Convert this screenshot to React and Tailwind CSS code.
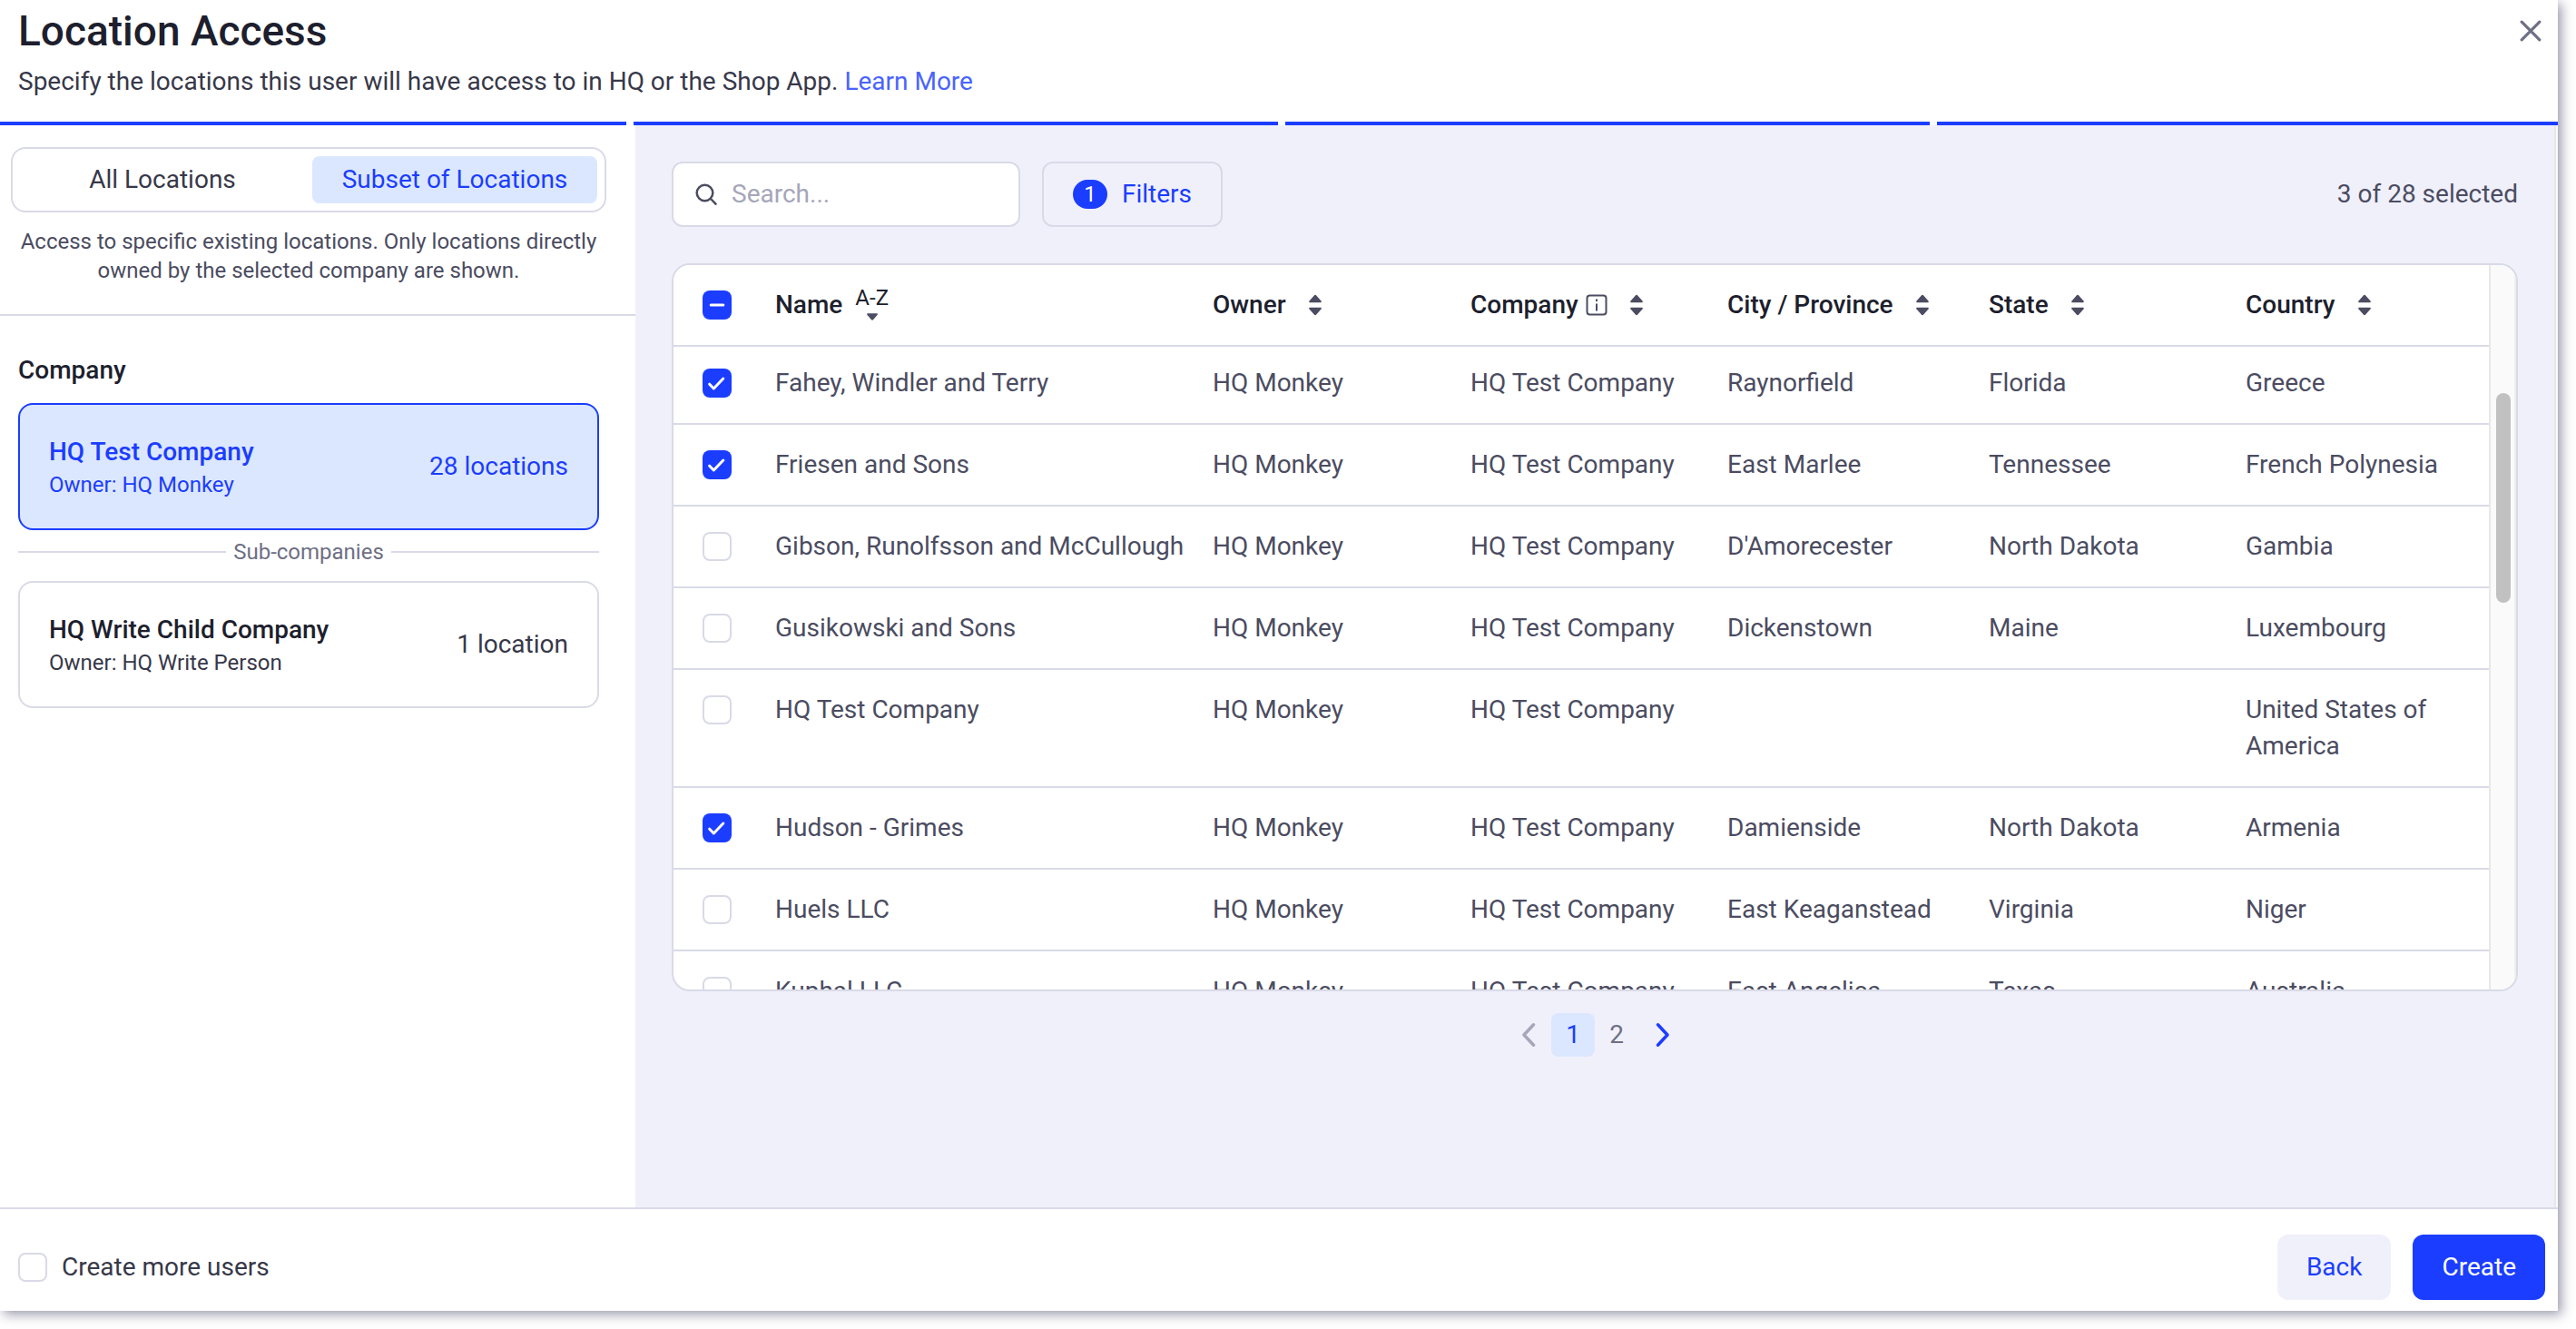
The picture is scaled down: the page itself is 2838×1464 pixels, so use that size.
import { useState } from 'react'

const COMPANIES = [
  { id: 1, name: 'HQ Test Company', owner: 'HQ Monkey', count: '28 locations' },
  { id: 2, name: 'HQ Write Child Company', owner: 'HQ Write Person', count: '1 location' },
]

const LOCATIONS = [
  { name: 'Fahey, Windler and Terry', city: 'Raynorfield', state: 'Florida', country: 'Greece' },
  { name: 'Friesen and Sons', city: 'East Marlee', state: 'Tennessee', country: 'French Polynesia' },
  { name: 'Gibson, Runolfsson and McCullough', city: "D'Amorecester", state: 'North Dakota', country: 'Gambia' },
  { name: 'Gusikowski and Sons', city: 'Dickenstown', state: 'Maine', country: 'Luxembourg' },
  { name: 'HQ Test Company', city: '', state: '', country: 'United States of America' },
  { name: 'Hudson - Grimes', city: 'Damienside', state: 'North Dakota', country: 'Armenia' },
  { name: 'Huels LLC', city: 'East Keaganstead', state: 'Virginia', country: 'Niger' },
  { name: 'Kuphal LLC', city: 'East Angelica', state: 'Texas', country: 'Australia' },
]

const GRID = 'grid grid-cols-[96px_482px_284px_283px_288px_283px_1fr]'

function Checkbox({ checked, mixed, onChange }) {
  const on = checked || mixed
  return (
    <button
      type="button"
      role="checkbox"
      aria-checked={mixed ? 'mixed' : checked}
      onClick={onChange}
      className={`flex h-8 w-8 shrink-0 items-center justify-center rounded-lg ${on ? 'bg-[#1b3dff]' : 'border-2 border-[#d9dae7] bg-white'}`}
    >
      {on && (
        <svg width="32" height="32" viewBox="0 0 32 32" fill="none" stroke="#fff" strokeWidth="3" strokeLinecap="round" strokeLinejoin="round">
          {mixed ? <path d="M9.2 16h13.6" /> : <path d="M7.7 17.2l4.6 4.8 10.5-11" />}
        </svg>
      )}
    </button>
  )
}

function SortIcon() {
  return (
    <svg width="14" height="24" viewBox="0 0 14 24" fill="#4b4c61" className="ml-[25px] shrink-0">
      <path d="M7 .8c.5 0 .9.2 1.2.6l5.3 6c.7.8.3 1.8-.8 1.8H1.3C.2 9.2-.2 8.2.5 7.4l5.3-6C6.1 1 6.5.8 7 .8z" />
      <path d="M7 23.2c.5 0 .9-.2 1.2-.6l5.3-6c.7-.8.3-1.8-.8-1.8H1.3c-1.1 0-1.5 1-.8 1.8l5.3 6c.3.4.7.6 1.2.6z" />
    </svg>
  )
}

function InfoIcon() {
  return (
    <svg width="24" height="24" viewBox="0 0 24 24" fill="none" stroke="#4b4c61" strokeWidth="2" className="ml-2 shrink-0">
      <rect x="1.5" y="1.5" width="21" height="21" rx="3" />
      <path d="M12 10.5v8" />
      <path d="M12 5.5v2.5" />
    </svg>
  )
}

function HeaderCell({ label, info }) {
  return (
    <div className="flex items-center pl-4">
      <span>{label}</span>
      {info && <InfoIcon />}
      <SortIcon />
    </div>
  )
}

function CompanyCard({ company, selected, onClick }) {
  return (
    <button
      type="button"
      onClick={onClick}
      className={`flex h-[140px] w-full items-center justify-between rounded-2xl border-2 px-8 text-left ${selected ? 'border-[#1b3dff] bg-[#dbe7ff] text-[#1b3dff]' : 'border-[#d9dae7] bg-white text-[#373849]'}`}
    >
      <div>
        <p className={`font-medium ${selected ? '' : 'text-[#1e1f2e]'}`}>{company.name}</p>
        <p className="text-[24px] leading-8">Owner: {company.owner}</p>
      </div>
      <span>{company.count}</span>
    </button>
  )
}

export default function App() {
  const [companyId, setCompanyId] = useState(1)
  const [selected, setSelected] = useState([0, 1, 5])
  const [createMore, setCreateMore] = useState(false)

  const toggle = (i) =>
    setSelected((prev) => (prev.includes(i) ? prev.filter((x) => x !== i) : [...prev, i]))

  return (
    <div className="h-[1464px] w-[2838px] overflow-hidden bg-white font-[Roboto,sans-serif] text-[28px] leading-10 text-[#373849]">
      <div className="flex h-[1444px] w-[2818px] flex-col bg-white shadow-[4px_4px_12px_rgba(55,56,90,0.5)]">

        <header className="flex h-[134px] shrink-0 justify-between pl-5">
          <div className="flex flex-col">
            <h1 className="pt-1 text-[46px] leading-[60px] font-medium text-[#1e1f2e]">Location Access</h1>
            <p className="pt-1.5">
              Specify the locations this user will have access to in HQ or the Shop App.{' '}
              <a href="#" className="text-[#4963ff]">Learn More</a>
            </p>
          </div>
          <svg width="24" height="24" viewBox="0 0 24 24" stroke="#6e6f84" strokeWidth="3.2" strokeLinecap="round" className="mt-[22px] mr-[18px]">
            <path d="M2.2 2.2l19.6 19.6M21.8 2.2L2.2 21.8" />
          </svg>
        </header>

        {/* Step progress */}
        <div className="flex h-1 shrink-0 gap-2">
          <div className="w-[690px] bg-[#1b3dff]" />
          <div className="w-[710px] bg-[#1b3dff]" />
          <div className="w-[710px] bg-[#1b3dff]" />
          <div className="flex-1 bg-[#1b3dff]" />
        </div>

        <div className="flex min-h-0 flex-1">
          <aside className="w-[700px] shrink-0">
            <div className="border-b-2 border-[#d9dae7] pt-6 pr-8 pb-8 pl-3">
              <div className="flex h-[72px] gap-2 rounded-2xl border-2 border-[#d9dae7] p-2">
                <button type="button" className="flex-1 rounded-lg">All Locations</button>
                <button type="button" className="flex-1 rounded-lg bg-[#dbe7ff] text-[#1b3dff]">Subset of Locations</button>
              </div>
              <p className="pt-4 text-center text-[24px] leading-8 text-[#4b4c61]">
                Access to specific existing locations. Only locations directly<br />owned by the selected company are shown.
              </p>
            </div>

            <div className="pt-10 pr-10 pl-5">
              <h2 className="pb-4 font-medium text-[#1e1f2e]">Company</h2>
              <CompanyCard company={COMPANIES[0]} selected={companyId === 1} onClick={() => setCompanyId(1)} />
              <div className="flex items-center gap-2 pt-2 pb-4 text-[24px] leading-8 text-[#6e6f84]">
                <div className="h-0.5 flex-1 bg-[#d9dae7]" />
                Sub-companies
                <div className="h-0.5 flex-1 bg-[#d9dae7]" />
              </div>
              <CompanyCard company={COMPANIES[1]} selected={companyId === 2} onClick={() => setCompanyId(2)} />
            </div>
          </aside>

          <main className="flex-1 bg-[#f0f0fb] pt-10 pr-10 pl-10 text-[#4b4c61]">
            <div className="flex items-center justify-between">
              <div className="flex gap-6">
                <label className="flex h-[72px] w-[384px] items-center gap-4 rounded-xl border-2 border-[#d9dae7] bg-white px-6">
                  <svg width="24" height="24" viewBox="0 0 24 24" fill="none" stroke="#4b4c61" strokeWidth="2.5" strokeLinecap="round" className="shrink-0">
                    <circle cx="10.5" cy="10.5" r="8.8" />
                    <path d="M17 17l5.5 5.7" />
                  </svg>
                  <input placeholder="Search..." className="w-full outline-none placeholder:text-[#a5a6b9]" />
                </label>
                <button type="button" className="flex h-[72px] items-center gap-4 rounded-xl border-2 border-[#d9dae7] px-8 text-[#1b3dff]">
                  <span className="flex h-8 w-[38px] items-center justify-center rounded-full bg-[#1b3dff] text-[24px] leading-8 text-white">1</span>
                  Filters
                </button>
              </div>
              <span>3 of 28 selected</span>
            </div>

            <div className="mt-10 flex h-[802px] overflow-hidden rounded-[20px] border-2 border-[#d9dae7] bg-white">
              <div className="flex min-w-0 flex-1 flex-col">
                <div className={`relative z-10 h-[90px] shrink-0 border-b-2 border-[#d9dae7] bg-white font-medium text-[#1e1f2e] ${GRID}`}>
                  <div className="flex items-center pl-8"><Checkbox mixed /></div>
                  <div className="flex items-center pl-4">
                    <span>Name</span>
                    <div className="ml-3.5 flex flex-col items-center pb-[7px] text-[24px] leading-8 font-normal">
                      A-Z
                      <svg width="12" height="8" viewBox="0 0 12 8" fill="#4b4c61" className="mt-px">
                        <path d="M1 .2h10c.9 0 1.2.8.7 1.500L7 7.200c-.6.6-1.400.6-2 0L.3 1.700C-.2 1 .1.200 1 .2z" />
                      </svg>
                    </div>
                  </div>
                  <HeaderCell label="Owner" />
                  <HeaderCell label="Company" info />
                  <HeaderCell label="City / Province" />
                  <HeaderCell label="State" />
                  <HeaderCell label="Country" />
                </div>

                <div className="-mt-1 min-h-0 flex-1 overflow-hidden">
                  {LOCATIONS.map((loc, i) => (
                    <div key={loc.name} className={`border-b-2 border-[#d9dae7] py-6 ${GRID}`}>
                      <div className="pt-1 pl-8"><Checkbox checked={selected.includes(i)} onChange={() => toggle(i)} /></div>
                      <div className="pl-4 whitespace-nowrap">{loc.name}</div>
                      <div className="pl-4">HQ Monkey</div>
                      <div className="pl-4">HQ Test Company</div>
                      <div className="pl-4">{loc.city}</div>
                      <div className="pl-4">{loc.state}</div>
                      <div className="pr-4 pl-4">{loc.country}</div>
                    </div>
                  ))}
                </div>
              </div>

              {/* Scrollbar */}
              <div className="w-[30px] shrink-0 border-x-2 border-l-[#e8e8e8] border-r-[#ededed] bg-[#fafafa] pt-[141px] pl-1.5">
                <div className="h-[231px] w-4 rounded-full bg-[#c1c1c1]" />
              </div>
            </div>

            <nav className="mt-6 flex items-center justify-center">
              <button type="button" className="flex h-12 w-12 items-center justify-center">
                <svg width="16" height="28" viewBox="0 0 16 28" fill="none" stroke="#a5a6b9" strokeWidth="3.5" strokeLinecap="round" strokeLinejoin="round">
                  <path d="M12.5 2.8L2 14l10.500 11.200" />
                </svg>
              </button>
              <button type="button" className="h-12 w-12 rounded-lg bg-[#dbe7ff] text-[#1b3dff]">1</button>
              <button type="button" className="h-12 w-12 text-[#6e6f84]">2</button>
              <button type="button" className="flex h-12 w-12 items-center justify-center pl-1.5">
                <svg width="16" height="28" viewBox="0 0 16 28" fill="none" stroke="#1b3dff" strokeWidth="3.5" strokeLinecap="round" strokeLinejoin="round">
                  <path d="M2.5 2.8L13 14 2.500 25.200" />
                </svg>
              </button>
            </nav>
          </main>
          <div className="w-1 shrink-0 border-l-2 border-[#e8e8e8] bg-[#fafafa]" />
        </div>

        <footer className="flex h-[114px] shrink-0 items-start justify-between border-t-2 border-[#d9dae7] pt-7 pr-3.5 pl-5">
          <div className="flex h-[72px] items-center gap-4">
            <Checkbox checked={createMore} onChange={() => setCreateMore(!createMore)} />
            Create more users
          </div>
          <div className="flex gap-6">
            <button type="button" className="h-[72px] rounded-xl bg-[#f0f0fb] px-8 text-[#1b3dff]">Back</button>
            <button type="button" className="h-[72px] rounded-xl bg-[#1b3dff] px-8 text-white">Create</button>
          </div>
        </footer>
      </div>
    </div>
  )
}
